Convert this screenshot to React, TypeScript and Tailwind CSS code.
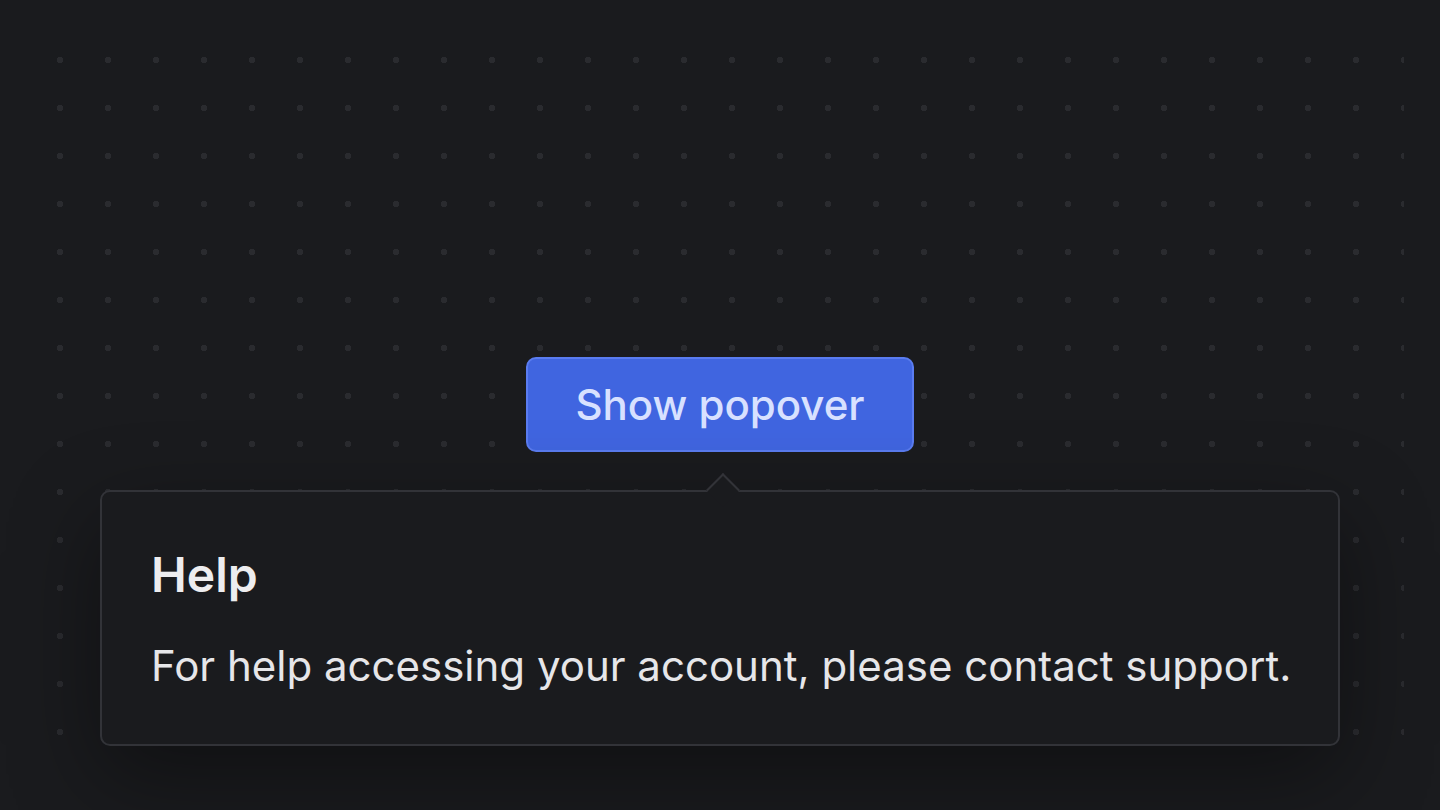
export default function App() {
  return (
    <div className="h-[810px] w-[1440px] overflow-hidden bg-[#1a1b1e] p-[36px] font-['Inter',sans-serif]">
      <div className="flex h-full w-full flex-col items-center bg-[radial-gradient(circle,#2a2b2f_3px,transparent_3.5px)] bg-[length:48px_48px] pt-[321px]">
        <button className="h-[95px] w-[388px] shrink-0 rounded-[10px] border-2 border-[#5a7cf0] bg-[#4065e0] text-[42px] font-medium text-[#d8e1ff]">
          Show popover
        </button>

        <div className="relative mt-[38px] w-[1240px] shrink-0 rounded-[10px] border-2 border-[#323338] bg-[#1a1b1e] pt-[54px] pr-[40px] pb-[47px] pl-[49px] shadow-[0_30px_90px_rgba(0,0,0,0.4)]">
          <div className="absolute top-[-14px] left-[621px] h-[24px] w-[24px] -translate-x-1/2 rotate-45 border-t-2 border-l-2 border-[#323338] bg-[#1a1b1e]" />
          <h2 className="text-[48px] leading-[1.2] font-semibold text-[#ededef]">Help</h2>
          <p className="mt-[30px] whitespace-nowrap text-[42px] leading-[1.5] text-[#e6e6e9]">
            For help accessing your account, please contact support.
          </p>
        </div>
      </div>
    </div>
  );
}
